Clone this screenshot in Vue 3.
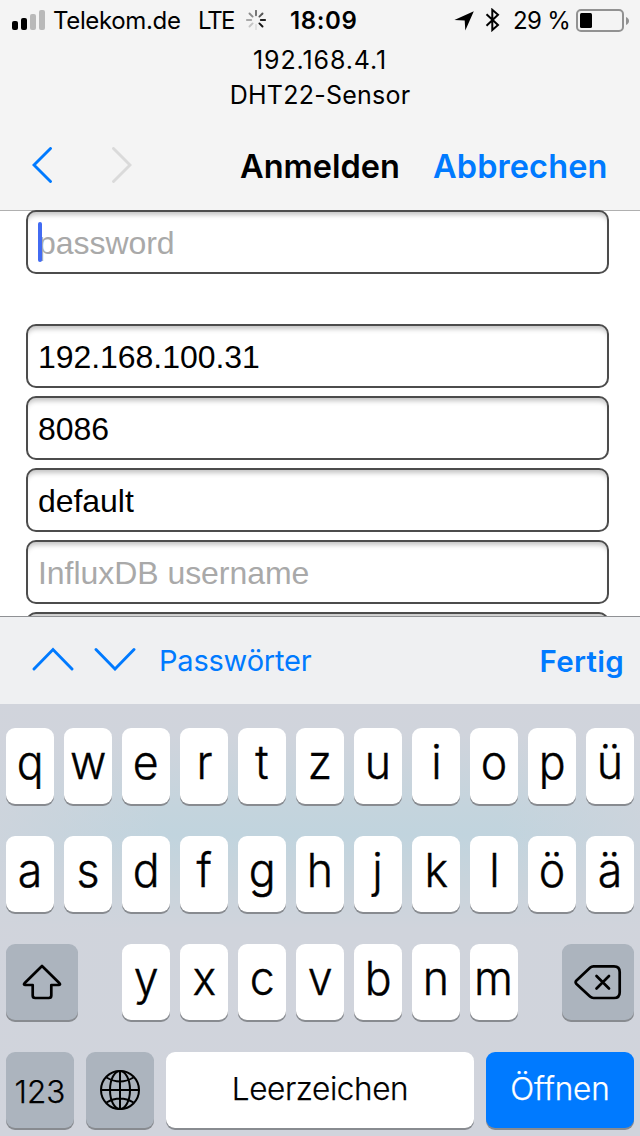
<script setup>
const rows = ['qwertzuiopü', 'asdfghjklöä'].map((r) => [...r])
const third = [...'yxcvbnm']
const rays = [
  { a: 0, c: '#6f6f6f' }, { a: 45, c: '#555' }, { a: 90, c: '#222' }, { a: 135, c: '#111' },
  { a: 180, c: '#e0e0e0' }, { a: 225, c: '#c4c4c4' }, { a: 270, c: '#a8a8a8' }, { a: 315, c: '#8a8a8a' },
]
const fields = [
  { text: 'password', empty: true, focus: true, gap: true },
  { text: '192.168.100.31' },
  { text: '8086' },
  { text: 'default' },
  { text: 'InfluxDB username', empty: true },
  { text: '' },
]
</script>

<template>
  <div class="screen">
    <header>
      <div class="status">
        <svg class="signal" width="34" height="20" viewBox="0 0 34 20">
          <rect x="0" y="11" width="6" height="9" rx="2" />
          <rect x="9" y="8" width="6" height="12" rx="2" />
          <rect x="18" y="4" width="6" height="16" rx="2" fill="#b9b9b9" />
          <rect x="27" y="0" width="6" height="20" rx="2" fill="#b9b9b9" />
        </svg>
        <span class="carrier">Telekom.de</span>
        <span class="lte">LTE</span>
        <svg class="spinner" width="20" height="20" viewBox="-10 -10 20 20">
          <line v-for="r in rays" :key="r.a" x1="0" y1="-4.8" x2="0" y2="-9.2" :stroke="r.c" stroke-width="1.9" stroke-linecap="round" :transform="`rotate(${r.a})`" />
        </svg>
        <span class="time">18:09</span>
        <svg class="loc" width="20" height="20" viewBox="0 0 20 20"><path d="M19.8 0.2 11.3 19.6 10.7 9.6 0.4 9z" /></svg>
        <svg class="bt" width="16" height="24" viewBox="0 0 16 24"><path d="M1.500 6.200 13 17 7.300 22V1.800L13 6.800 1.500 17.800" fill="none" stroke="#000" stroke-width="2" /></svg>
        <span class="pct">29 %</span>
        <svg class="battery" width="54" height="24" viewBox="0 0 54 24">
          <rect x="1" y="1" width="46" height="21" rx="4" fill="none" stroke="#929292" stroke-width="2" />
          <rect x="4" y="4" width="12" height="15" rx="1.5" />
          <path d="M50 8c4 1.5 4 6.500 0 8z" fill="#929292" />
        </svg>
      </div>
      <div class="host"><span class="ip">192.168.4.1</span></div>
      <div class="host"><span class="name">DHT22-Sensor</span></div>
      <nav>
        <svg class="back" width="20" height="36" viewBox="0 0 20 36"><path d="M18.500 1.500 2 18 18.500 34.500" /></svg>
        <svg class="forward" width="20" height="36" viewBox="0 0 20 36"><path d="M1.500 1.500 18 18 1.500 34.500" /></svg>
        <span class="title">Anmelden</span>
        <span class="cancel">Abbrechen</span>
      </nav>
    </header>

    <main>
      <div v-for="(f, i) in fields" :key="i" class="field" :class="{ empty: f.empty, gap: f.gap }">
        <span>{{ f.text }}</span><i v-if="f.focus" class="caret"></i>
      </div>
    </main>

    <div class="accessory">
      <svg class="up" width="42" height="24" viewBox="0 0 42 24"><path d="M2 22 21 2.500 40 22" /></svg>
      <svg class="down" width="42" height="24" viewBox="0 0 42 24"><path d="M2 2.500 21 22 40 2.500" /></svg>
      <span class="passwords">Passwörter</span>
      <span class="done">Fertig</span>
    </div>

    <section class="keyboard">
      <div v-for="(row, i) in rows" :key="i" class="row">
        <div v-for="k in row" :key="k" class="key"><span class="glyph">{{ k }}</span></div>
      </div>
      <div class="row spread">
        <div class="key dark wide">
          <svg width="40" height="36" viewBox="0 0 40 36"><path d="M20 2 37.500 19.300Q38.800 20.800 37 21H29.300V31.500Q29.300 34 26.800 34H13.200Q10.700 34 10.700 31.500V21H3Q1.200 20.800 2.500 19.300Z" /></svg>
        </div>
        <div class="letters"><div v-for="k in third" :key="k" class="key"><span class="glyph">{{ k }}</span></div></div>
        <div class="key dark wide">
          <svg class="del" width="48" height="36" viewBox="0 0 48 36">
            <path d="M19.500 2.300H40Q45.700 2.300 45.700 8V28.500Q45.700 34 40 34H19.500Q17.500 34 16 32.600L2.500 20Q.8 18.200 2.500 16.400L16 3.700Q17.500 2.300 19.500 2.300Z" />
            <path d="M22.500 12 35 24.500M35 12 22.500 24.500" stroke-linecap="round" />
          </svg>
        </div>
      </div>
      <div class="row bottom">
        <div class="key dark fn num"><span>123</span></div>
        <div class="key dark fn">
          <svg class="globe" width="40" height="40" viewBox="0 0 40 40">
            <circle cx="20" cy="20" r="19" /><ellipse cx="20" cy="20" rx="10" ry="19" />
            <path d="M20 1V39M1 20H39M6.500 7.500Q20 15.500 33.500 7.500M6.500 32.500Q20 24.500 33.500 32.500" />
          </svg>
        </div>
        <div class="key space"><span>Leerzeichen</span></div>
        <div class="key open"><span>Öffnen</span></div>
      </div>
    </section>
  </div>
</template>

<style>
body { margin: 0; overflow: hidden; }
</style>

<style scoped>
.screen { width: 640px; height: 1136px; overflow: hidden; display: flex; flex-direction: column; background: #fff; font-family: Inter, "Liberation Sans", sans-serif; color: #000; }
svg { display: block; flex: none; }
span { white-space: nowrap; }
header { height: 210px; flex: none; background: #f4f4f4; }
.status { height: 43px; display: flex; align-items: flex-start; font-size: 24px; line-height: 42px; }
.signal { margin: 10px 0 0 12px; }
.carrier { width: 128px; margin-left: 7px; letter-spacing: -0.35px; }
.lte { width: 36px; margin-left: 17px; letter-spacing: -1.9px; }
.spinner { margin: 10px 0 0 12px; }
.time { width: 68px; margin-left: 24px; font-weight: 600; letter-spacing: 0.6px; }
.loc { margin: 11px 0 0 96px; }
.bt { margin: 8px 0 0 11px; }
.pct { width: 57px; margin-left: 12px; letter-spacing: -0.7px; }
.battery { margin: 9px 0 0 6px; }
.host { height: 35px; line-height: 35px; text-align: center; font-size: 25px; }
.ip { letter-spacing: 0.9px; }
.name { letter-spacing: 0.25px; }
nav { height: 97px; display: flex; align-items: flex-start; font-size: 32.5px; font-weight: 600; line-height: 108px; }
nav svg path, .accessory path { fill: none; stroke: #007aff; stroke-width: 2.9; stroke-linecap: round; stroke-linejoin: miter; }
.back { margin: 34px 0 0 32px; }
.forward { margin: 34px 0 0 60px; }
nav .forward path { stroke: #dadada; }
.title { width: 162px; margin-left: 108px; }
.cancel { margin-left: 31px; color: #007aff; letter-spacing: 0.1px; }
main { height: 406px; flex: none; overflow: hidden; padding: 0 31px 0 26px; box-sizing: border-box; background: linear-gradient(#b0b0b0, #b0b0b0) top / 100% 1px no-repeat #fff; }
.field { position: relative; height: 64px; margin-bottom: 8px; box-sizing: border-box; border: 2px solid #4c4c4c; border-radius: 10px; padding-left: 10px; background: #fff; box-shadow: inset 0 6px 5px -3px #c4c4c4; font: 32px/62px "Liberation Sans", sans-serif; letter-spacing: -0.05px; }
.field.gap { margin-bottom: 50px; }
.empty { color: #a9a9a9; }
.caret { position: absolute; left: 10px; top: 10px; width: 4px; height: 40px; border-radius: 2px; background: #426bf2; }
.accessory { height: 88px; flex: none; box-sizing: border-box; border-top: 1px solid #8f9194; background: #eff0f2; display: flex; align-items: flex-start; color: #007aff; font-size: 29px; line-height: 87px; }
.up { margin: 30px 0 0 32px; }
.down { margin: 30px 0 0 20px; }
.passwords { margin-left: 23px; letter-spacing: -0.2px; }
.done { margin-left: auto; margin-right: 16px; font-weight: 600; font-size: 29.5px; line-height: 88px; letter-spacing: 0.3px; }
.keyboard { height: 432px; box-sizing: border-box; padding: 24px 6px 0; display: flex; flex-direction: column; gap: 30px; background: linear-gradient(90deg, rgba(209, 212, 220, 0.7), rgba(209, 212, 220, 0) 25%, rgba(209, 212, 220, 0) 78%, rgba(209, 212, 220, 0.65)), linear-gradient(#d1d4dc 0, #d0d4dc 30px, #c4d4dd 105px, #c1d4de 130px, #c8d4dc 175px, #d0d4dc 225px, #d1d4dc 100%); }
.row { height: 78px; flex: none; display: flex; gap: 10px; }
.letters { display: flex; gap: 10px; }
.spread { justify-content: space-between; }
.bottom { gap: 12px; }
.key { width: 48px; height: 76px; flex: none; border-radius: 9px; background: #fff; box-shadow: 0 2px 0 #888b90; font-size: 47px; font-weight: 300; line-height: 68px; text-align: center; display: flex; justify-content: center; }
.glyph { display: block; transform: scaleX(0.95); -webkit-text-stroke: 0.4px #000; }
.dark { background: #acb4be; }
.dark path, .dark circle, .dark ellipse { fill: none; stroke: #000; stroke-width: 2.7; stroke-linejoin: round; }
.wide { width: 72px; }
.wide svg { margin-top: 20px; }
.fn { width: 68px; }
.globe { margin-top: 18px; }
.dark.fn path, .dark.fn circle, .dark.fn ellipse { stroke-width: 2; }
.num, .space, .open { font-size: 31.5px; line-height: 74px; -webkit-text-stroke: 0.25px currentColor; }
.num { line-height: 80px; }
.space { width: 308px; letter-spacing: -0.4px; }
.open { width: 148px; background: #007aff; color: #fff; letter-spacing: -0.1px; }
</style>
